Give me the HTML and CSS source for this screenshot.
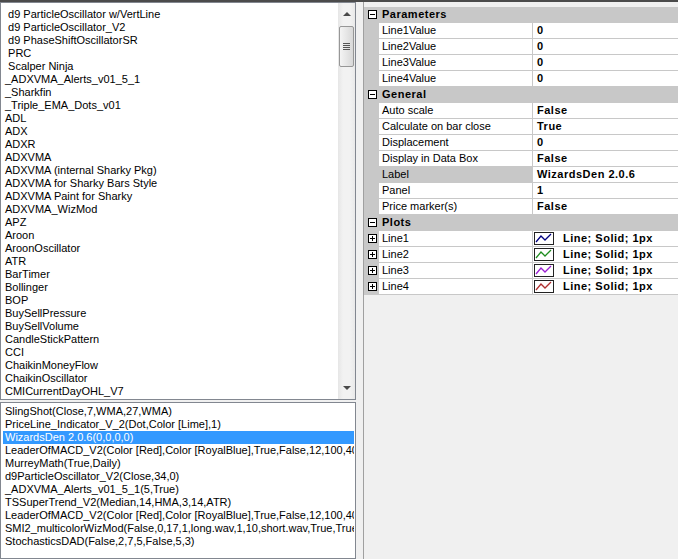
FILE: index.html
```html
<!DOCTYPE html>
<html lang="en">
<head>
    <meta charset="UTF-8">
    <title>Indicators</title>
    <link rel="stylesheet" href="styles.css">
</head>
<body>
<div class="window">

    <!-- left side: available and applied indicators -->
    <div class="left">
        <div class="listbox available">
            <div class="items">
                <div class="item">&nbsp;d9 ParticleOscillator w/VertLine</div>
                <div class="item">&nbsp;d9 ParticleOscillator_V2</div>
                <div class="item">&nbsp;d9 PhaseShiftOscillatorSR</div>
                <div class="item">&nbsp;PRC</div>
                <div class="item">&nbsp;Scalper Ninja</div>
                <div class="item">_ADXVMA_Alerts_v01_5_1</div>
                <div class="item">_Sharkfin</div>
                <div class="item">_Triple_EMA_Dots_v01</div>
                <div class="item">ADL</div>
                <div class="item">ADX</div>
                <div class="item">ADXR</div>
                <div class="item">ADXVMA</div>
                <div class="item">ADXVMA (internal Sharky Pkg)</div>
                <div class="item">ADXVMA for Sharky Bars Style</div>
                <div class="item">ADXVMA Paint for Sharky</div>
                <div class="item">ADXVMA_WizMod</div>
                <div class="item">APZ</div>
                <div class="item">Aroon</div>
                <div class="item">AroonOscillator</div>
                <div class="item">ATR</div>
                <div class="item">BarTimer</div>
                <div class="item">Bollinger</div>
                <div class="item">BOP</div>
                <div class="item">BuySellPressure</div>
                <div class="item">BuySellVolume</div>
                <div class="item">CandleStickPattern</div>
                <div class="item">CCI</div>
                <div class="item">ChaikinMoneyFlow</div>
                <div class="item">ChaikinOscillator</div>
                <div class="item">CMICurrentDayOHL_V7</div>
            </div>
            <div class="scrollbar">
                <div class="sb-button"><span class="arrow up"></span></div>
                <div class="sb-track"><div class="sb-thumb"><span class="grip"></span></div></div>
                <div class="sb-button"><span class="arrow down"></span></div>
            </div>
        </div>

        <div class="listbox applied">
            <div class="row">SlingShot(Close,7,WMA,27,WMA)</div>
            <div class="row">PriceLine_Indicator_V_2(Dot,Color [Lime],1)</div>
            <div class="row selected">WizardsDen 2.0.6(0,0,0,0)</div>
            <div class="row">LeaderOfMACD_V2(Color [Red],Color [RoyalBlue],True,False,12,100,40,40,5)</div>
            <div class="row">MurreyMath(True,Daily)</div>
            <div class="row">d9ParticleOscillator_V2(Close,34,0)</div>
            <div class="row">_ADXVMA_Alerts_v01_5_1(5,True)</div>
            <div class="row">TSSuperTrend_V2(Median,14,HMA,3,14,ATR)</div>
            <div class="row">LeaderOfMACD_V2(Color [Red],Color [RoyalBlue],True,False,12,100,40,40,5)</div>
            <div class="row">SMI2_multicolorWizMod(False,0,17,1,long.wav,1,10,short.wav,True,True,0)</div>
            <div class="row">StochasticsDAD(False,2,7,5,False,5,3)</div>
        </div>
    </div>

    <div class="splitter"></div>

    <!-- property grid -->
    <div class="props">
        <div class="grid">
            <div class="cat"><span class="gutter"><span class="toggle"></span></span><span class="cat-name">Parameters</span></div>
            <div class="prop"><span class="gutter"></span><span class="name">Line1Value</span><span class="value">0</span></div>
            <div class="prop"><span class="gutter"></span><span class="name">Line2Value</span><span class="value">0</span></div>
            <div class="prop"><span class="gutter"></span><span class="name">Line3Value</span><span class="value">0</span></div>
            <div class="prop"><span class="gutter"></span><span class="name">Line4Value</span><span class="value">0</span></div>

            <div class="cat"><span class="gutter"><span class="toggle"></span></span><span class="cat-name">General</span></div>
            <div class="prop"><span class="gutter"></span><span class="name">Auto scale</span><span class="value">False</span></div>
            <div class="prop"><span class="gutter"></span><span class="name">Calculate on bar close</span><span class="value">True</span></div>
            <div class="prop"><span class="gutter"></span><span class="name">Displacement</span><span class="value">0</span></div>
            <div class="prop"><span class="gutter"></span><span class="name">Display in Data Box</span><span class="value">False</span></div>
            <div class="prop active"><span class="gutter"></span><span class="name">Label</span><span class="value">WizardsDen 2.0.6</span></div>
            <div class="prop"><span class="gutter"></span><span class="name">Panel</span><span class="value">1</span></div>
            <div class="prop"><span class="gutter"></span><span class="name">Price marker(s)</span><span class="value">False</span></div>

            <div class="cat"><span class="gutter"><span class="toggle"></span></span><span class="cat-name">Plots</span></div>
            <div class="prop"><span class="gutter"><span class="toggle plus"></span></span><span class="name">Line1</span>
                <span class="value"><svg class="swatch" width="20" height="13" viewBox="0 0 20 13"><rect x="0.5" y="0.5" width="19" height="12" fill="#fff" stroke="#222"/><polyline points="2,10 7,4 11,8 17,2" fill="none" stroke="#000080" stroke-width="1.3"/></svg>Line; Solid; 1px</span></div>
            <div class="prop"><span class="gutter"><span class="toggle plus"></span></span><span class="name">Line2</span>
                <span class="value"><svg class="swatch" width="20" height="13" viewBox="0 0 20 13"><rect x="0.5" y="0.5" width="19" height="12" fill="#fff" stroke="#222"/><polyline points="2,10 7,4 11,8 17,2" fill="none" stroke="#1e8c1e" stroke-width="1.3"/></svg>Line; Solid; 1px</span></div>
            <div class="prop"><span class="gutter"><span class="toggle plus"></span></span><span class="name">Line3</span>
                <span class="value"><svg class="swatch" width="20" height="13" viewBox="0 0 20 13"><rect x="0.5" y="0.5" width="19" height="12" fill="#fff" stroke="#222"/><polyline points="2,10 7,4 11,8 17,2" fill="none" stroke="#9a1ed2" stroke-width="1.3"/></svg>Line; Solid; 1px</span></div>
            <div class="prop"><span class="gutter"><span class="toggle plus"></span></span><span class="name">Line4</span>
                <span class="value"><svg class="swatch" width="20" height="13" viewBox="0 0 20 13"><rect x="0.5" y="0.5" width="19" height="12" fill="#fff" stroke="#222"/><polyline points="2,10 7,4 11,8 17,2" fill="none" stroke="#b03030" stroke-width="1.3"/></svg>Line; Solid; 1px</span></div>
        </div>
    </div>

</div>
</body>
</html>
```

FILE: styles.css
```css
body {
    margin: 0;
    background: #f0f0f0;
    font-family: "Liberation Sans", Arial, sans-serif;
    font-size: 11px;
    color: #000;
    overflow: hidden;
}

.window {
    height: 559px;
    box-sizing: border-box;
    border-top: 2px solid #4b4b4b;
    display: flex;
}

/* left lists */
.left {
    width: 356px;
    display: flex;
    flex-direction: column;
    gap: 2px;
}
.listbox {
    background: #fff;
    border: 1px solid #828790;
    box-sizing: border-box;
    overflow: hidden;
    white-space: nowrap;
}
.available {
    height: 398px;
    display: flex;
}
.available .items {
    flex: 1;
    padding: 5px 0 0 4px;
    overflow: hidden;
}
.item {
    height: 13px;
    line-height: 13px;
}

/* scrollbar */
.scrollbar {
    width: 17px;
    display: flex;
    flex-direction: column;
    background: linear-gradient(to right, #e6e6e6, #f2f2f2 30%, #f2f2f2 70%, #e9e9e9);
}
.sb-button {
    height: 22px;
    display: flex;
    justify-content: center;
    align-items: center;
}
.arrow {
    width: 0;
    height: 0;
    border-left: 4px solid transparent;
    border-right: 4px solid transparent;
}
.arrow.up { border-bottom: 4px solid #4a4a4a; }
.arrow.down { border-top: 4px solid #4a4a4a; }
.sb-track {
    flex: 1;
    padding: 1px 1px 0 1px;
}
.sb-thumb {
    height: 41px;
    box-sizing: border-box;
    border: 1px solid #979797;
    border-radius: 2px;
    background: linear-gradient(to right, #f4f4f4, #e6e6e6 50%, #d8d8d8);
    display: flex;
    justify-content: center;
    align-items: center;
}
.grip {
    width: 7px;
    height: 7px;
    background: repeating-linear-gradient(to bottom, #555 0, #555 1px, transparent 1px, transparent 2px);
}

.applied {
    flex: 1;
    padding: 2px 1px 0 2px;
}
.row {
    height: 13px;
    line-height: 13px;
    padding-left: 2px;
    overflow: hidden;
}
.row.selected {
    background: #3399ff;
    color: #fff;
}

.splitter {
    width: 7px;
}

/* property grid */
.props {
    flex: 1;
    border-left: 1px solid #a0a0a0;
    padding-top: 5px;
    overflow: hidden;
}
.cat, .prop {
    height: 16px;
    line-height: 15px;
    box-sizing: border-box;
    border-bottom: 1px solid #c8c8c8;
    display: flex;
    white-space: nowrap;
}
.cat {
    background: #c8c8c8;
}
.prop {
    background: #fff;
}
.gutter {
    width: 15px;
    flex: none;
    background: #c8c8c8;
    display: flex;
    align-items: center;
    padding-left: 4px;
    box-sizing: border-box;
}
.toggle {
    width: 9px;
    height: 9px;
    box-sizing: border-box;
    border: 1px solid #000;
    background: #fff;
    position: relative;
}
.toggle::before {
    content: "";
    position: absolute;
    left: 1px;
    top: 3px;
    width: 5px;
    height: 1px;
    background: #000;
}
.toggle.plus::after {
    content: "";
    position: absolute;
    left: 3px;
    top: 1px;
    width: 1px;
    height: 5px;
    background: #000;
}
.cat-name {
    font-weight: bold;
    letter-spacing: 0.5px;
    padding-left: 3px;
}
.name {
    width: 154px;
    flex: none;
    padding-left: 3px;
    box-sizing: border-box;
    border-right: 1px solid #c8c8c8;
    overflow: hidden;
}
.prop.active .name {
    background: #c8c8c8;
}
.value {
    flex: 1;
    padding-left: 4px;
    font-weight: bold;
    letter-spacing: 0.5px;
    display: flex;
    align-items: center;
}
.swatch {
    flex: none;
    margin: 0 9px 0 -3px;
}
```
